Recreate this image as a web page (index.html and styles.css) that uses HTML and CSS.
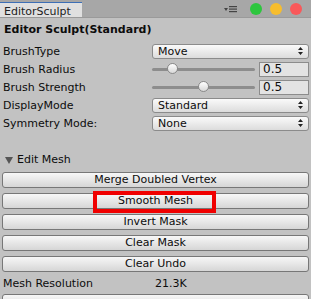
FILE: index.html
```html
<!DOCTYPE html>
<html>

<head>
  <meta http-equiv="Content-Type" content="text/html; charset=UTF-8" />
  <link rel="stylesheet" href="styles.css">
</head>

<body>
  <div id="window">
    <div class="tabbar">
      <div class="tab">EditorSculpt</div>
      <div class="tab-tools">
        <span class="menu-icon">
          <svg width="14" height="8" viewBox="0 0 14 8">
            <path d="M0 3 L4 3 L2 6 Z" fill="#444" />
            <rect x="5" y="1" width="8" height="1.2" fill="#444" />
            <rect x="5" y="3.5" width="8" height="1.2" fill="#444" />
            <rect x="5" y="6" width="8" height="1.2" fill="#444" />
          </svg>
        </span>
        <span class="dot green"></span>
        <span class="dot yellow"></span>
        <span class="dot red"></span>
      </div>
    </div>

    <div class="panel">
      <div class="title">Editor Sculpt(Standard)</div>

      <div class="props">
        <div class="row">
          <span class="label">BrushType</span>
          <div class="dropdown">Move
            <svg class="arrows" width="5" height="8" viewBox="0 0 5 8">
              <path d="M0 3 L2.5 0 L5 3 Z M0 5 L5 5 L2.5 8 Z" fill="#222" />
            </svg>
          </div>
        </div>
        <div class="row">
          <span class="label">Brush Radius</span>
          <div class="slider">
            <div class="track"><span class="thumb" style="left: 20px"></span></div>
            <div class="field">0.5</div>
          </div>
        </div>
        <div class="row">
          <span class="label">Brush Strength</span>
          <div class="slider">
            <div class="track"><span class="thumb" style="left: 51px"></span></div>
            <div class="field">0.5</div>
          </div>
        </div>
        <div class="row">
          <span class="label">DisplayMode</span>
          <div class="dropdown">Standard
            <svg class="arrows" width="5" height="8" viewBox="0 0 5 8">
              <path d="M0 3 L2.5 0 L5 3 Z M0 5 L5 5 L2.5 8 Z" fill="#222" />
            </svg>
          </div>
        </div>
        <div class="row">
          <span class="label">Symmetry Mode:</span>
          <div class="dropdown">None
            <svg class="arrows" width="5" height="8" viewBox="0 0 5 8">
              <path d="M0 3 L2.5 0 L5 3 Z M0 5 L5 5 L2.5 8 Z" fill="#222" />
            </svg>
          </div>
        </div>
      </div>

      <div class="foldout"><span class="fold-arrow"></span>Edit Mesh</div>

      <div class="buttons">
        <div class="btn">Merge Doubled Vertex</div>
        <div class="btn">Smooth Mesh<span class="highlight"></span></div>
        <div class="btn">Invert Mask</div>
        <div class="btn">Clear Mask</div>
        <div class="btn">Clear Undo</div>
      </div>

      <div class="row info">
        <span class="label">Mesh Resolution</span>
        <span class="value">21.3K</span>
      </div>

      <div class="btn last"></div>
    </div>
  </div>
</body>

</html>
```

FILE: styles.css
```css
html {
  height: 100%;
}

body {
  margin: 0;
  height: 100%;
  font-family: "DejaVu Sans", Verdana, sans-serif;
  font-size: 11px;
  color: #0c0c0c;
  background-color: #c2c2c2;
  overflow: hidden;
}

#window {
  width: 311px;
  height: 299px;
}

/* Tab bar on top */
.tabbar {
  display: flex;
  height: 18px;
  background-color: #a7a7a7;
  border-bottom: 1px solid #9a9a9a;
  box-sizing: border-box;
}

.tab {
  width: 82px;
  margin-top: 2px;
  box-sizing: border-box;
  border-top: 1px solid #3d6fb6;
  background-color: #e0e0e0;
  padding: 2px 0 0 4px;
  color: #222;
  font-size: 11px;
}

.tab-tools {
  flex: 1;
  display: flex;
  justify-content: flex-end;
  align-items: center;
  gap: 8px;
  padding-right: 9px;
}

.menu-icon {
  display: flex;
  margin-right: 4px;
}

.dot {
  width: 12px;
  height: 12px;
  border-radius: 50%;
}

.dot.green {
  background-color: #2dc63e;
}

.dot.yellow {
  background-color: #f7bd2d;
}

.dot.red {
  background-color: #f9585a;
}

.panel {
  padding: 0 2px 0 3px;
}

.title {
  margin-top: 4px;
  height: 16px;
  line-height: 16px;
  font-weight: bold;
  padding-left: 1px;
}

/* Property rows */
.props {
  margin-top: 6px;
  display: flex;
  flex-direction: column;
  gap: 3px;
}

.row {
  display: flex;
  align-items: center;
  height: 15px;
}

.label {
  width: 149px;
  flex-shrink: 0;
}

.dropdown {
  flex: 1;
  position: relative;
  height: 15px;
  box-sizing: border-box;
  border: 1px solid #8b8b8b;
  border-radius: 3px;
  background: linear-gradient(#fafafa, #dcdcdc);
  padding-left: 5px;
  line-height: 13px;
}

.arrows {
  position: absolute;
  right: 5px;
  top: 2px;
}

.slider {
  flex: 1;
  display: flex;
  align-items: center;
  gap: 4px;
}

.track {
  position: relative;
  flex: 1;
  height: 3px;
  border-radius: 2px;
  background-color: #8d8d8d;
}

.thumb {
  position: absolute;
  top: -5px;
  width: 11px;
  height: 11px;
  margin-left: -5px;
  box-sizing: border-box;
  border-radius: 50%;
  border: 1px solid #8a8a8a;
  background: linear-gradient(#ffffff, #d8d8d8);
}

.field {
  width: 50px;
  height: 15px;
  box-sizing: border-box;
  border: 1px solid #8c8c8c;
  background-color: #e3e3e3;
  padding-left: 3px;
  font-size: 12px;
  line-height: 13px;
}

.foldout {
  margin-top: 22px;
  height: 14px;
  line-height: 14px;
  display: flex;
  align-items: center;
}

.fold-arrow {
  width: 0;
  height: 0;
  margin: 0 4px 0 2px;
  border-left: 4px solid transparent;
  border-right: 4px solid transparent;
  border-top: 7px solid #555;
}

/* Buttons */
.buttons {
  margin-top: 5px;
  display: flex;
  flex-direction: column;
  gap: 5px;
  margin-left: -1px;
}

.btn {
  position: relative;
  height: 16px;
  box-sizing: border-box;
  border: 1px solid #777;
  border-radius: 3px;
  background: linear-gradient(#f7f7f7, #d6d6d6);
  text-align: center;
  line-height: 14px;
}

.highlight {
  position: absolute;
  left: 90px;
  top: -3px;
  width: 123px;
  height: 22px;
  box-sizing: border-box;
  border: 4px solid #f00000;
}

.row.info {
  margin-top: 4px;
}

.value {
  padding-left: 3px;
}

.btn.last {
  margin: 3px 0 0 -1px;
}
```
